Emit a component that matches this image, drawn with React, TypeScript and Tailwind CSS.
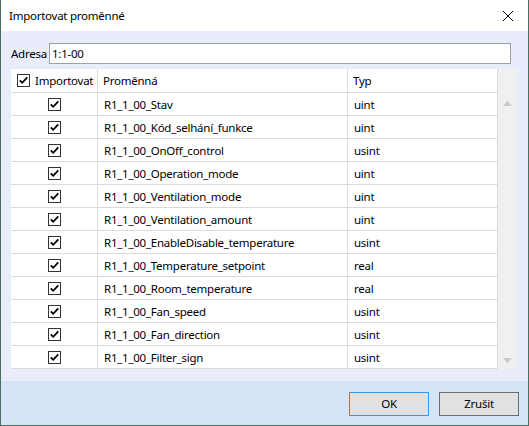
import React from "react";

const rows: [string, string][] = [
  ["R1_1_00_Stav", "uint"],
  ["R1_1_00_Kód_selhání_funkce", "uint"],
  ["R1_1_00_OnOff_control", "usint"],
  ["R1_1_00_Operation_mode", "uint"],
  ["R1_1_00_Ventilation_mode", "uint"],
  ["R1_1_00_Ventilation_amount", "uint"],
  ["R1_1_00_EnableDisable_temperature", "usint"],
  ["R1_1_00_Temperature_setpoint", "real"],
  ["R1_1_00_Room_temperature", "real"],
  ["R1_1_00_Fan_speed", "usint"],
  ["R1_1_00_Fan_direction", "usint"],
  ["R1_1_00_Filter_sign", "usint"],
];

function Check() {
  return (
    <div className="w-[13px] h-[13px] shrink-0 border border-[#333333] bg-white flex items-center justify-center">
      <svg width="11" height="11" viewBox="0 0 11 11">
        <path d="M1.8 5.3 L4.2 7.8 L9.3 2.4" fill="none" stroke="#000" strokeWidth="1.8" />
      </svg>
    </div>
  );
}

export default function App() {
  return (
    <div
      className="w-[529px] h-[426px] flex flex-col border-l border-r border-b border-[#4a6e60] text-[11.5px] tracking-[-0.25px] text-black"
      style={{ fontFamily: '"Segoe UI", "Noto Sans", sans-serif' }}
    >
      <div className="h-[31px] bg-white flex items-center justify-between pl-[8px] pr-[14px]">
        <span className="leading-none">Importovat proměnné</span>
        <svg width="12" height="12" viewBox="0 0 12 12">
          <path d="M1 1 L11 11 M11 1 L1 11" stroke="#000" strokeWidth="1" />
        </svg>
      </div>
      <div className="flex-1 bg-[#e9ecfa] flex flex-col px-[10px]">
        <div className="mt-[12px] h-[21px] flex items-center">
          <span className="w-[38px] pt-[1px]">Adresa</span>
          <div className="w-[462px] h-[21px] border border-[#a0a0a0] bg-white flex items-center pl-[2px] pt-[1px]">
            1:1-00
          </div>
        </div>
        <div className="mt-[5px] w-[506px] h-[300px] flex">
          <div className="w-[487px] bg-white flex flex-col">
            <div className="h-[24px] flex border-b border-[#dadada]">
              <div className="w-[87px] flex items-center pl-[6px] gap-[5px] border-r border-[#dadada] overflow-hidden">
                <Check />
                <span className="pt-[1px]">Importovat</span>
              </div>
              <div className="w-[250px] flex items-center pl-[5px] pt-[1px] border-r border-[#dadada]">Proměnná</div>
              <div className="w-[150px] flex items-center pl-[5px] pt-[1px] border-r border-[#dadada]">Typ</div>
            </div>
            {rows.map(([n, t]) => (
              <div key={n} className="h-[23px] flex border-b border-[#dadada]">
                <div className="w-[87px] flex items-center justify-center border-r border-[#dadada]">
                  <Check />
                </div>
                <div className="w-[250px] flex items-center pl-[6px] pt-[2px] border-r border-[#dadada]">{n}</div>
                <div className="w-[150px] flex items-center pl-[6px] pt-[2px] border-r border-[#dadada]">{t}</div>
              </div>
            ))}
          </div>
          <div className="w-[19px] bg-[#f0f0f0] flex flex-col items-center justify-between pt-[32px] pb-[6px]">
            <svg width="9" height="5" viewBox="0 0 9 5"><path d="M0 5 L4.5 0 L9 5 Z" fill="#c8c8c8" /></svg>
            <svg width="9" height="5" viewBox="0 0 9 5"><path d="M0 0 L4.5 5 L9 0 Z" fill="#c8c8c8" /></svg>
          </div>
        </div>
        <div className="h-[12px]" />
      </div>
      <div className="h-[44px] bg-[#d6e4f8] flex items-start justify-end gap-[10px] pr-[9px] pt-[11px]">
        <button className="w-[80px] h-[24px] bg-[#e1e1e1] border border-[#3c96e6] flex items-center justify-center">OK</button>
        <button className="w-[80px] h-[24px] bg-[#e1e1e1] border border-[#6e6e6e] flex items-center justify-center">Zrušit</button>
      </div>
    </div>
  );
}
